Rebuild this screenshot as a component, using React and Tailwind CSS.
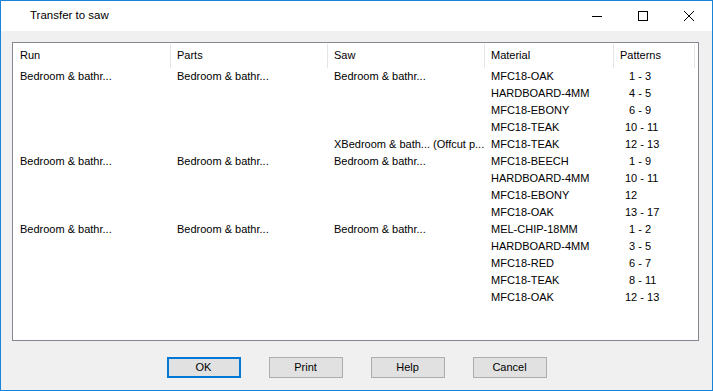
import React from "react";

const B = "Bedroom & bathr...";
const rows = [
  [B, B, B, "MFC18-OAK", "1 - 3", false],
  ["", "", "", "HARDBOARD-4MM", "4 - 5", false],
  ["", "", "", "MFC18-EBONY", "6 - 9", false],
  ["", "", "", "MFC18-TEAK", "10 - 11", true],
  ["", "", "XBedroom & bath... (Offcut p...", "MFC18-TEAK", "12 - 13", true],
  [B, B, B, "MFC18-BEECH", "1 - 9", false],
  ["", "", "", "HARDBOARD-4MM", "10 - 11", true],
  ["", "", "", "MFC18-EBONY", "12", true],
  ["", "", "", "MFC18-OAK", "13 - 17", true],
  [B, B, B, "MEL-CHIP-18MM", "1 - 2", false],
  ["", "", "", "HARDBOARD-4MM", "3 - 5", false],
  ["", "", "", "MFC18-RED", "6 - 7", false],
  ["", "", "", "MFC18-TEAK", "8 - 11", false],
  ["", "", "", "MFC18-OAK", "12 - 13", true],
];

const grid = "grid grid-cols-[158px_157px_157px_129px_81px]";

function Btn({ children, primary }) {
  return (
    <div
      className={
        "w-[74px] h-[21px] flex items-center justify-center bg-[#e1e1e1] text-[11px] text-black " +
        (primary ? "border-2 border-[#0078d7]" : "border border-[#adadad]")
      }
    >
      {children}
    </div>
  );
}

export default function App() {
  return (
    <div
      className="w-[713px] h-[391px] border border-[#1883d7] bg-[#f0f0f0] flex flex-col overflow-hidden"
      style={{ fontFamily: '"Liberation Sans", Arial, sans-serif' }}
    >
      <div className="h-[30px] bg-white flex items-center shrink-0">
        <div className="pl-[29px] text-[11.5px] text-black flex-1">Transfer to saw</div>
        <div className="flex h-full">
          <div className="w-[46px] h-full flex items-center justify-center">
            <svg width="10" height="10" viewBox="0 0 10 10">
              <line x1="0" y1="5.5" x2="10" y2="5.5" stroke="#000" strokeWidth="1" />
            </svg>
          </div>
          <div className="w-[46px] h-full flex items-center justify-center">
            <svg width="10" height="10" viewBox="0 0 10 10">
              <rect x="0.5" y="0.5" width="9" height="9" fill="none" stroke="#000" strokeWidth="1" />
            </svg>
          </div>
          <div className="w-[46px] h-full flex items-center justify-center">
            <svg width="10" height="10" viewBox="0 0 10 10">
              <path d="M0 0 L10 10 M10 0 L0 10" stroke="#000" strokeWidth="1" />
            </svg>
          </div>
        </div>
      </div>
      <div className="flex-1 flex flex-col pt-[11px] pl-[11px]">
        <div className="w-[687px] h-[299px] border border-[#828790] bg-white text-[11px] text-black">
          <div className={grid + " h-[25px] items-stretch"}>
            {["Run", "Parts", "Saw", "Material", "Patterns"].map((h, i) => (
              <div key={h} className="relative flex items-center">
                <span className={i === 0 ? "pl-[7px]" : "pl-[6px]"}>{h}</span>
                <div className="absolute right-0 top-[1px] bottom-0 w-px bg-[#e5e5e5]" />
              </div>
            ))}
          </div>
          {rows.map((r, idx) => (
            <div key={idx} className={grid + " h-[17px] items-center leading-none"}>
              <div className="pl-[7px] whitespace-nowrap">{r[0]}</div>
              <div className="pl-[6px] whitespace-nowrap">{r[1]}</div>
              <div className="pl-[6px] whitespace-nowrap">{r[2]}</div>
              <div className="pl-[6px] whitespace-nowrap">{r[3]}</div>
              <div className={(r[5] ? "pl-[11px]" : "pl-[15px]") + " whitespace-nowrap"}>{r[4]}</div>
            </div>
          ))}
        </div>
        <div className="flex justify-center gap-[28px] mt-[16px] pr-[11px]">
          <Btn primary>OK</Btn>
          <Btn>Print</Btn>
          <Btn>Help</Btn>
          <Btn>Cancel</Btn>
        </div>
      </div>
    </div>
  );
}
